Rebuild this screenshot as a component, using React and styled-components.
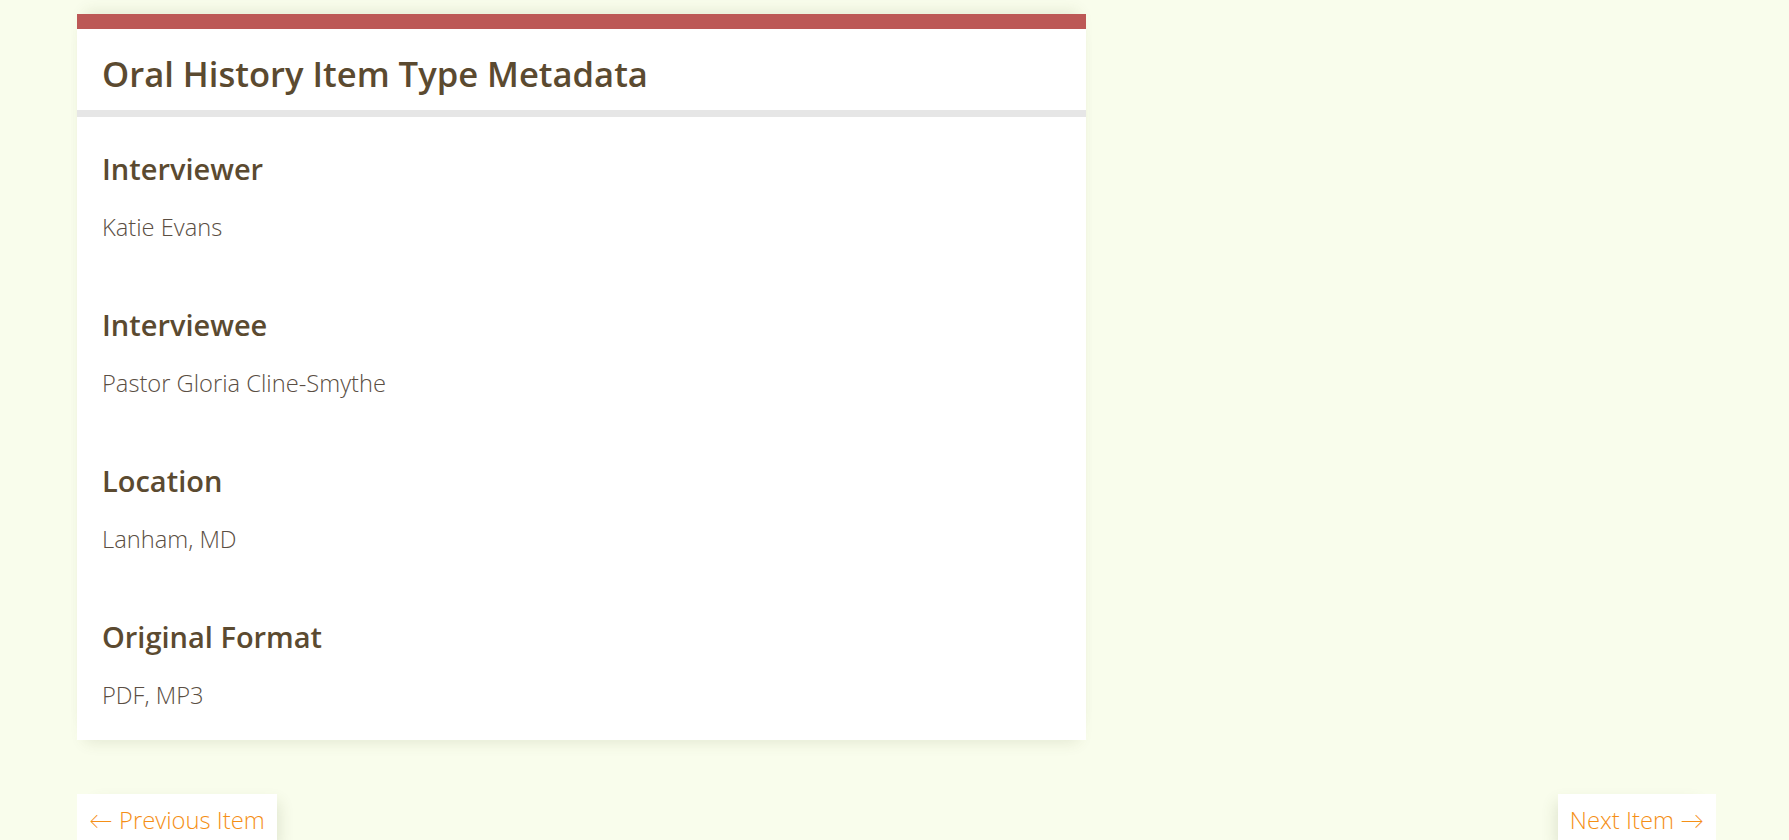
import React from "react";
import styled, { createGlobalStyle } from "styled-components";

const Global = createGlobalStyle`
  html, body { margin: 0; padding: 0; }
  body {
    background: #f9fdec;
    font-family: "Open Sans", "Lato", sans-serif;
    overflow: hidden;
  }
`;

const Page = styled.div`
  padding: 14px 73px 0 77px;
`;

const Card = styled.section`
  width: 1009px;
  background: #ffffff;
  border-top: 15px solid #bc5856;
  box-shadow: 0 -10px 14px -8px rgba(90, 100, 50, 0.14),
    0 10px 14px -8px rgba(90, 100, 50, 0.14);
`;

const Header = styled.header`
  padding: 24px 25px 16px;
  border-bottom: 7px solid #e6e6e6;
`;

const Title = styled.h2`
  margin: 0;
  font-size: 34.6px;
  line-height: 41px;
  font-weight: 600;
  color: #5b4a30;
`;

const Body = styled.div`
  padding: 35px 25px 28px;
  display: flex;
  flex-direction: column;
  gap: 64px;
`;

const Field = styled.div`
  display: flex;
  flex-direction: column;
  gap: 24px;
`;

const Label = styled.h3`
  margin: 0;
  font-size: 29px;
  line-height: 34px;
  font-weight: 600;
  color: #5b4a30;
`;

const Value = styled.div`
  font-size: 23.7px;
  line-height: 34px;
  font-weight: 300;
  color: #5a4e43;
`;

const Nav = styled.nav`
  margin-top: 54px;
  display: flex;
  justify-content: space-between;
`;

const NavLink = styled.a`
  display: block;
  background: #ffffff;
  padding: 9px 12px 20px;
  font-size: 23.8px;
  line-height: 34px;
  font-weight: 300;
  color: #f58f16;
  text-decoration: none;
  box-shadow: ${(p) =>
    p.$side === "left"
      ? "10px 0 14px -8px rgba(90, 100, 50, 0.16)"
      : "-10px 0 14px -8px rgba(90, 100, 50, 0.16)"};
`;

const fields = [
  ["Interviewer", "Katie Evans"],
  ["Interviewee", "Pastor Gloria Cline-Smythe"],
  ["Location", "Lanham, MD"],
  ["Original Format", "PDF, MP3"],
];

export default function App() {
  return (
    <>
      <Global />
      <Page>
        <Card>
          <Header>
            <Title>Oral History Item Type Metadata</Title>
          </Header>
          <Body>
            {fields.map(([label, value]) => (
              <Field key={label}>
                <Label>{label}</Label>
                <Value>{value}</Value>
              </Field>
            ))}
          </Body>
        </Card>
        <Nav>
          <NavLink href="#" $side="left">← Previous Item</NavLink>
          <NavLink href="#" $side="right">Next Item →</NavLink>
        </Nav>
      </Page>
    </>
  );
}
